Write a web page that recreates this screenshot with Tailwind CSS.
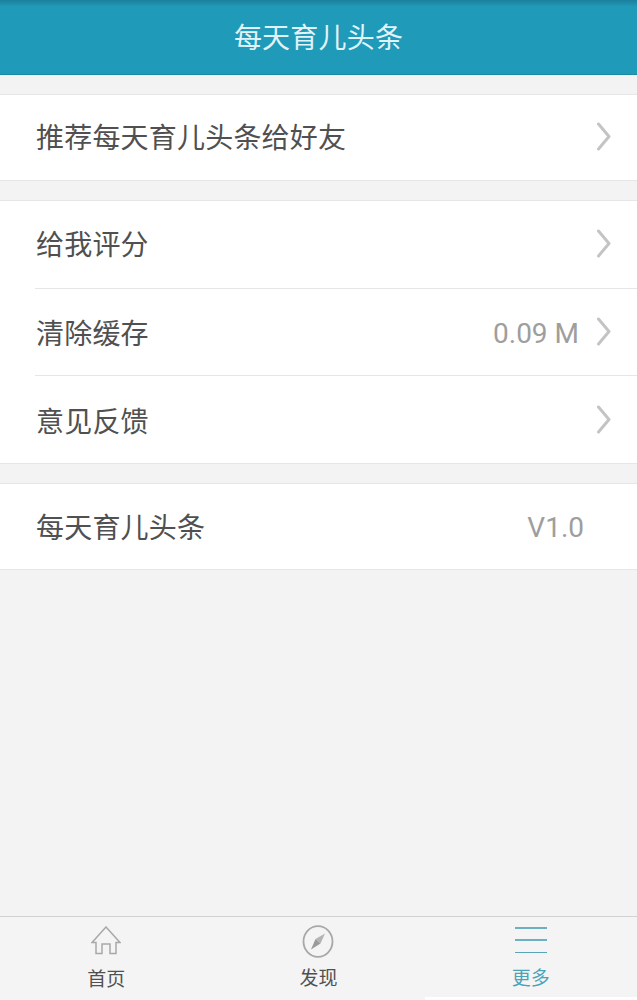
<!DOCTYPE html>
<html lang="zh">
<head>
<meta charset="utf-8">
<script src="https://cdn.jsdelivr.net/npm/@tailwindcss/browser@4"></script>
</head>
<body class="bg-[#f3f3f3]">
<div class="relative w-[637px] h-[1000px] overflow-hidden flex flex-col bg-[#f3f3f3] font-['Noto_Sans_CJK_SC','Roboto',sans-serif]">
  <header class="h-[75px] shrink-0 flex items-center justify-center pb-[2px] bg-gradient-to-b from-[#1b7f9c] from-[0%] via-[#1f9ab8] via-[9%] to-[#1f9ab8] border-b border-[#1b8aa6] text-[28px] leading-none tracking-[0.2px] text-[#dff3f8]">每天育儿头条</header>

  <main class="flex-1 flex flex-col gap-[19px] pt-[19px] text-[28px] tracking-[0.2px] text-[#505050]">
    <section class="bg-white border-y border-[#e6e6e6]">
      <div class="h-[85px] flex items-center pl-[36px] pr-[26px] justify-between">
        <span class="leading-none mb-[3px]">推荐每天育儿头条给好友</span>
        <svg class="w-[15px] h-[29px] mb-[2px]" viewBox="0 0 15 29" fill="none" stroke="#c4c4c4" stroke-width="3" stroke-linecap="round" stroke-linejoin="round"><path d="M2.5 2 L13 14.5 L2.5 27"/></svg>
      </div>
    </section>

    <section class="bg-white border-y border-[#e6e6e6]">
      <div class="h-[87px] flex items-center pl-[36px] pr-[26px] justify-between">
        <span class="leading-none mb-[3px]">给我评分</span>
        <svg class="w-[15px] h-[29px] mb-[3px]" viewBox="0 0 15 29" fill="none" stroke="#c4c4c4" stroke-width="3" stroke-linecap="round" stroke-linejoin="round"><path d="M2.5 2 L13 14.5 L2.5 27"/></svg>
      </div>
      <div class="ml-[35px] h-[87px] border-t border-[#e6e6e6] flex items-center pl-px pr-[26px] justify-between">
        <span class="leading-none mb-px">清除缓存</span>
        <div class="flex items-center gap-[17px]">
          <span class="font-['Roboto'] text-[28px] leading-none tracking-normal text-[#9e9e9e] mt-[3px]">0.09 M</span>
          <svg class="w-[15px] h-[29px] mb-[2px]" viewBox="0 0 15 29" fill="none" stroke="#c4c4c4" stroke-width="3" stroke-linecap="round" stroke-linejoin="round"><path d="M2.5 2 L13 14.5 L2.5 27"/></svg>
        </div>
      </div>
      <div class="ml-[35px] h-[88px] border-t border-[#e6e6e6] flex items-center pl-px pr-[26px] justify-between">
        <span class="leading-none">意见反馈</span>
        <svg class="w-[15px] h-[29px]" viewBox="0 0 15 29" fill="none" stroke="#c4c4c4" stroke-width="3" stroke-linecap="round" stroke-linejoin="round"><path d="M2.5 2 L13 14.5 L2.5 27"/></svg>
      </div>
    </section>

    <section class="bg-white border-y border-[#e6e6e6]">
      <div class="h-[85px] flex items-center pl-[36px] pr-[53px] justify-between">
        <span class="leading-none mb-px">每天育儿头条</span>
        <span class="font-['Roboto'] text-[28px] leading-none tracking-normal text-[#9e9e9e] mt-[2px]">V1.0</span>
      </div>
    </section>
  </main>

  <nav class="h-[84px] shrink-0 border-t border-[#d2d2d2] bg-[#f4f4f4] grid grid-cols-3 text-[19px] leading-none text-[#505050]">
    <a class="flex flex-col items-center pt-[9px]">
      <svg class="w-[30px] h-[29px]" viewBox="0 0 30 29" fill="none" stroke="#a8a8a8" stroke-width="1.5"><path d="M15 1 L29 16.5 H25 V27.5 H19 V18 H11 V27.5 H5 V16.5 H1 Z"/></svg>
      <span class="mt-[13px]">首页</span>
    </a>
    <a class="flex flex-col items-center pt-[8px]">
      <svg class="w-[32px] h-[33px]" viewBox="0 0 32 33" fill="none"><ellipse cx="16" cy="16.5" rx="14.5" ry="15.3" stroke="#a8a8a8" stroke-width="1.8"/><path d="M23 8.5 L18.5 18.5 L13.5 14 Z" fill="#b4b4b4"/><path d="M9 24.5 L13.5 14 L18.5 18.5 Z" fill="#9a9a9a"/></svg>
      <span class="mt-[9px]">发现</span>
    </a>
    <a class="flex flex-col items-center pt-[10px] text-[#4aa3b9]">
      <div class="w-[32px] h-[26px] flex flex-col justify-between">
        <div class="h-[1.5px] bg-[#6cb0c1]"></div>
        <div class="h-[2px] bg-[#6cb0c1]"></div>
        <div class="h-[1.5px] bg-[#5aa5b8]"></div>
      </div>
      <span class="mt-[14px]">更多</span>
    </a>
  </nav>
  <div class="absolute right-0 bottom-0 w-[212px] h-[3px] bg-white"></div>
</div>
</body>
</html>
